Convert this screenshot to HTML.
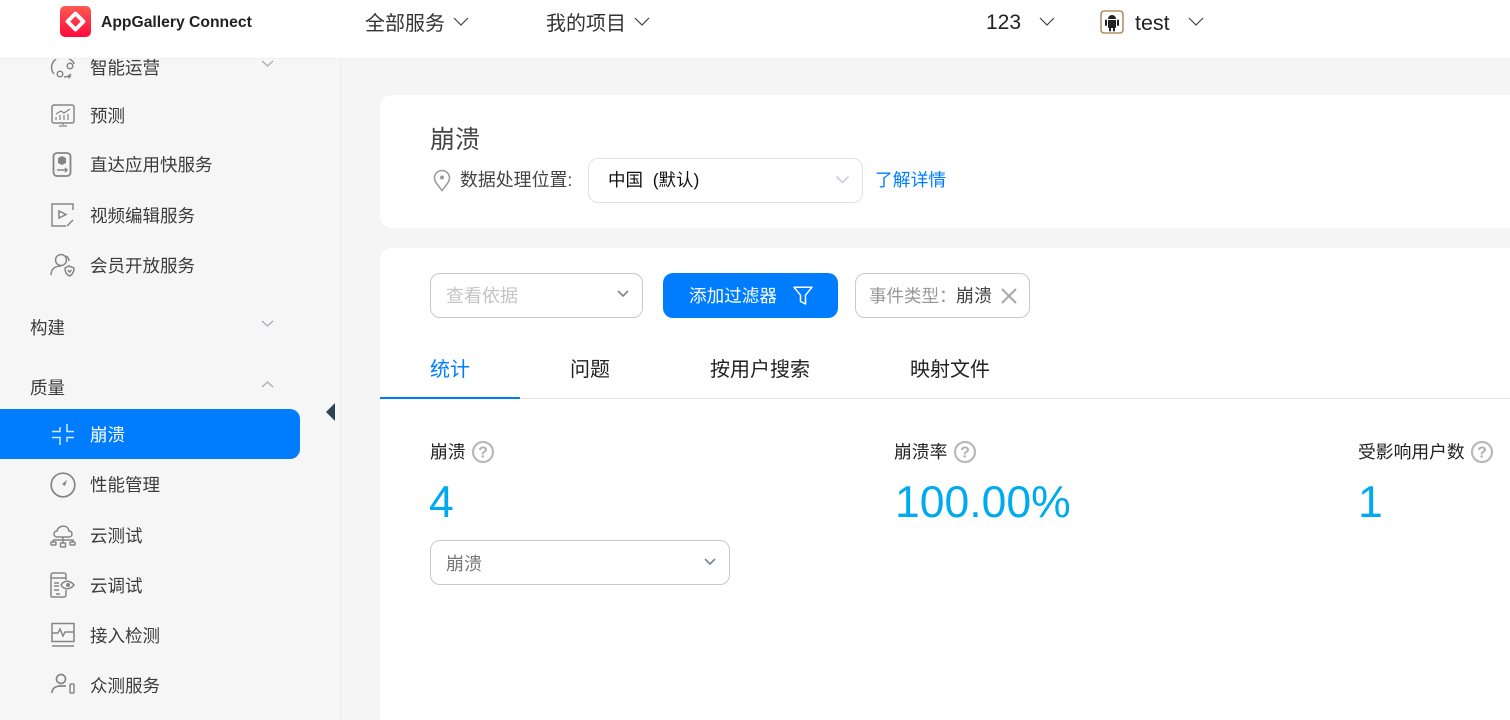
<!DOCTYPE html>
<html lang="zh">
<head>
<meta charset="utf-8">
<title>AppGallery Connect</title>
<style>
html,body{margin:0;padding:0;background:#f5f5f5}
body{position:relative;width:1510px;height:720px;overflow:hidden;font-family:"Liberation Sans","Noto Sans CJK SC",sans-serif;color:#333}
.a,.t{position:absolute}
.t{white-space:nowrap;line-height:24px;height:24px}
svg{position:absolute;overflow:visible;fill:none}
.m{font-size:17.5px;color:#3c3c3c;left:90px}
.g{font-size:17.5px;color:#3c3c3c;left:30px}
.i{stroke:#858585;stroke-width:1.5;fill:none}
.c{stroke:#a3a8b0;stroke-width:1.2;fill:none}
.box{position:absolute;box-sizing:border-box;background:#fff;border:1px solid #c9c9c9;border-radius:10px}
.num{font-size:44.5px;color:#00aaee;line-height:54px;height:54px}
.lab{font-size:17.800px;color:#222}
.q{stroke:#b9b9b9;stroke-width:2.200}
.qt{font-size:16px;font-weight:bold;fill:#b0b0b0;font-family:"Liberation Sans",sans-serif}
</style>
</head>
<body>
<div class="a" style="left:0;top:58px;width:340px;height:662px;background:#f6f6f6;border-right:1px solid #ececec"></div>

<!-- sidebar -->
<span class="t m" style="top:56px">智能运营</span>
<svg style="left:50px;top:56px" width="26" height="24" viewBox="0 0 26 24"><path class="i" d="M6 3C1 7 0 13 4 18M19 3c3 1 5 3 5 5M14 21c3 0 5-1 7-3M18 22l3-2"/><circle class="i" cx="10" cy="18" r="2.800"/><circle class="i" cx="20" cy="10" r="2.800"/></svg>
<svg style="left:261px;top:60px" width="13" height="8"><path class="c" d="M1 1l5.500 5L12 1"/></svg>

<span class="t m" style="top:104px">预测</span>
<svg style="left:51px;top:103px" width="24" height="24" viewBox="0 0 24 24"><rect class="i" x="1" y="2" width="22" height="18" rx="2"/><path class="i" d="M5 14v3M9 12v5M13 12v5M17 11v6M5 11l5-3 3 2 6-4M8 23h8M12 20v2" style="stroke-width:1.200"/></svg>

<span class="t m" style="top:153px">直达应用快服务</span>
<svg style="left:52px;top:152px" width="22" height="26" viewBox="0 0 22 26"><rect class="i" x="1.500" y="1" width="17" height="23" rx="3.500" style="stroke-width:1.800"/><path d="M6 6l4-2 4 2v5l-4 2-4-2z" fill="#858585"/><path class="i" d="M5 18h10m-2-2l2 2-2 2"/></svg>

<span class="t m" style="top:204px">视频编辑服务</span>
<svg style="left:51px;top:203px" width="24" height="24" viewBox="0 0 24 24"><path class="i" d="M22 7V1H1v22h14"/><path class="i" d="M8 8v7l7-3.500zM16 23l6-6"/></svg>

<span class="t m" style="top:254px">会员开放服务</span>
<svg style="left:50px;top:253px" width="26" height="24" viewBox="0 0 26 24"><circle class="i" cx="11" cy="7" r="5.500"/><path class="i" d="M1 22c0-6 4-9 10-9M16 3c2 1 3 3 3 5"/><path class="i" d="M15 15l4-2 5 2c0 5-2 7-4.500 8C17 22 15 20 15 15z"/><path class="i" d="M18 17l1.500 2 2-2"/></svg>

<span class="t g" style="top:316px">构建</span>
<svg style="left:261px;top:320px" width="13" height="8"><path class="c" d="M1 1l5.500 5L12 1"/></svg>
<span class="t g" style="top:376px">质量</span>
<svg style="left:261px;top:380px" width="13" height="8"><path class="c" d="M1 7l5.500-5L12 7"/></svg>

<div class="a" style="left:0;top:409px;width:300px;height:50px;background:#007dff;border-radius:0 10px 10px 0"></div>
<svg style="left:326px;top:403px" width="10" height="18"><path d="M9 0v18L0 9z" fill="#2f4257"/></svg>
<svg style="left:51px;top:423px" width="24" height="24" viewBox="0 0 24 24"><path d="M1 8.500h8V4M16 1v7.500h7M1 14.500h8V22M16 19v-4.500h7" stroke="#d5e8ff" stroke-width="1.500"/></svg>
<span class="t m" style="top:423px;color:#fff">崩溃</span>

<span class="t m" style="top:473px">性能管理</span>
<svg style="left:50px;top:472px" width="26" height="26" viewBox="0 0 26 26"><circle class="i" cx="13" cy="13" r="11.800" style="stroke-width:1.700"/><path d="M17 8l-2 6-3-2z" fill="#858585"/></svg>

<span class="t m" style="top:524px">云测试</span>
<svg style="left:50px;top:522px" width="26" height="26" viewBox="0 0 26 26"><path class="i" d="M7 15C3 15 3 9 7 9c1-6 11-7 12 0 4 0 4 6 0 6zM13 15v6M3 18h20v1M3 18v2M23 18v2"/><rect class="i" x="1" y="20" width="5" height="3" rx=".8"/><rect class="i" x="10.500" y="21" width="5" height="4" rx=".8"/><rect class="i" x="20" y="20" width="5" height="3" rx=".8"/></svg>

<span class="t m" style="top:574px">云调试</span>
<svg style="left:50px;top:572px" width="26" height="26" viewBox="0 0 26 26"><path class="i" d="M16 8V3a2 2 0 0 0-2-2H3a2 2 0 0 0-2 2v21a1 1 0 0 0 1 1h12a2 2 0 0 0 2-2v-5M1 6h15M4 11h5M4 14h5M4 18h5M6 22h4"/><path class="i" d="M11 13c3-5 9-5 13 0-4 5-10 5-13 0z"/><circle cx="18" cy="13" r="2" fill="#858585"/></svg>

<span class="t m" style="top:624px">接入检测</span>
<svg style="left:51px;top:622px" width="24" height="26" viewBox="0 0 24 26"><rect class="i" x="1" y="1.500" width="22" height="18"/><path class="i" d="M1 11h6l2-4 3 7 2-4h9M1 24h22"/></svg>

<span class="t m" style="top:674px">众测服务</span>
<svg style="left:51px;top:673px" width="24" height="24" viewBox="0 0 24 24"><circle class="i" cx="10" cy="6" r="4.500" style="stroke-width:1.700"/><path class="i" d="M1 20c0-5 4-7 9-7h5" style="stroke-width:1.700"/><rect class="i" x="19" y="11" width="4" height="9" rx="1"/></svg>

<!-- header -->
<div class="a" style="left:0;top:0;width:1510px;height:58px;background:#fff;border-bottom:1px solid #f0f0f0;box-sizing:content-box"></div>
<svg style="left:60px;top:6px" width="31" height="31" viewBox="0 0 31 31"><defs><linearGradient id="lg" x1="0" y1="0" x2="0" y2="1"><stop offset="0" stop-color="#fb5a52"/><stop offset="1" stop-color="#ff0a3c"/></linearGradient></defs><rect width="31" height="31" rx="5" fill="url(#lg)"/><path d="M15.500 7.500l8 8-8 8-8-8z" fill="none" stroke="#fff" stroke-width="3.800" stroke-linejoin="round"/></svg>
<span class="t" style="left:101px;top:11px;font-size:15.700px;font-weight:bold;color:#222">AppGallery Connect</span>
<span class="t" style="left:365px;top:12px;font-size:20px;color:#333">全部服务</span>
<svg style="left:453px;top:17px" width="16" height="10"><path d="M1 1l7 7 7-7" stroke="#444" stroke-width="1.200"/></svg>
<span class="t" style="left:546px;top:12px;font-size:20px;color:#333">我的项目</span>
<svg style="left:634px;top:17px" width="16" height="10"><path d="M1 1l7 7 7-7" stroke="#444" stroke-width="1.200"/></svg>
<span class="t" style="left:986px;top:11px;font-size:21px;color:#222">123</span>
<svg style="left:1039px;top:17px" width="16" height="10"><path d="M1 1l7 7 7-7" stroke="#444" stroke-width="1.200"/></svg>
<svg style="left:1100px;top:10px" width="24" height="24" viewBox="0 0 24 24"><rect x="1" y="1" width="22" height="22" rx="3" stroke="#a07a48" stroke-width="1.300" fill="#fff"/><path d="M8 9a4 4 0 0 1 8 0zM8 10h8v7a1 1 0 0 1-1 1H9a1 1 0 0 1-1-1z" fill="#222"/><path d="M6 10.500v4.500M18 10.500v4.500M10 18v2.500M14 18v2.500" stroke="#222" stroke-width="2" stroke-linecap="round"/></svg>
<span class="t" style="left:1135px;top:11px;font-size:21.500px;color:#222">test</span>
<svg style="left:1188px;top:17px" width="16" height="10"><path d="M1 1l7 7 7-7" stroke="#444" stroke-width="1.200"/></svg>

<!-- card 1 -->
<div class="a" style="left:380px;top:95px;width:1130px;height:133px;background:#fff;border-radius:12px 0 0 12px"></div>
<span class="t" style="left:430px;top:128px;font-size:25px;color:#444">崩溃</span>
<svg style="left:433px;top:169px" width="18" height="23" viewBox="0 0 18 23"><path d="M9 21.500C5 16 1.500 13 1.500 9a7.500 7.500 0 0 1 15 0c0 4-3.500 7-7.500 12.500z" stroke="#999" stroke-width="1.500"/><circle cx="9" cy="8.500" r="2" fill="#999"/></svg>
<span class="t" style="left:460px;top:168px;font-size:17.900px;color:#444">数据处理位置:</span>
<div class="box" style="left:588px;top:158px;width:275px;height:45px;border-color:#dfe1ea"></div>
<span class="t" style="left:608px;top:168px;font-size:17.500px;color:#111">中国&nbsp;&nbsp;(默认)</span>
<svg style="left:835px;top:175px" width="15" height="10"><path d="M1.500 1.500l6 6 6-6" stroke="#cfd1d8" stroke-width="1.800"/></svg>
<span class="t" style="left:875px;top:168px;font-size:17.800px;color:#007dff">了解详情</span>

<!-- card 2 -->
<div class="a" style="left:380px;top:248px;width:1130px;height:472px;background:#fff;border-radius:12px 0 0 0"></div>
<div class="box" style="left:430px;top:273px;width:213px;height:45px"></div>
<span class="t" style="left:446px;top:284px;font-size:18px;color:#c4c4c4">查看依据</span>
<svg style="left:616px;top:289px" width="14" height="9"><path d="M2 2l5 5 5-5" stroke="#7b8494" stroke-width="1.600"/></svg>
<div class="a" style="left:663px;top:273px;width:175px;height:45px;background:#007dff;border-radius:10px"></div>
<span class="t" style="left:689px;top:284px;font-size:17.600px;color:#fff">添加过滤器</span>
<svg style="left:793px;top:286px" width="20" height="19" viewBox="0 0 20 19"><path d="M1 1.200h18l-6.500 8V18l-5-2.500V9.200z" stroke="#fff" stroke-width="1.500" stroke-linejoin="round"/></svg>
<div class="box" style="left:855px;top:273px;width:175px;height:45px"></div>
<span class="t" style="left:869px;top:284px;font-size:17.500px;color:#999">事件类型：</span>
<span class="t" style="left:956px;top:284px;font-size:18px;color:#444">崩溃</span>
<svg style="left:1001px;top:288px" width="16" height="16"><path d="M1 1l14 14M15 1L1 15" stroke="#a8a8a8" stroke-width="2"/></svg>

<!-- tabs -->
<span class="t" style="left:430px;top:358px;font-size:20px;color:#007dff">统计</span>
<span class="t" style="left:570px;top:358px;font-size:20px;color:#222">问题</span>
<span class="t" style="left:710px;top:358px;font-size:20px;color:#222">按用户搜索</span>
<span class="t" style="left:910px;top:358px;font-size:20px;color:#222">映射文件</span>
<div class="a" style="left:380px;top:398px;width:1130px;height:1px;background:#e3e3e3"></div>
<div class="a" style="left:380px;top:397px;width:140px;height:2px;background:#007dff"></div>

<!-- stats -->
<span class="t lab" style="left:430px;top:440px">崩溃</span>
<svg style="left:471px;top:440px" width="24" height="24"><circle class="q" cx="12" cy="12" r="10"/><text class="qt" x="12" y="17.500" text-anchor="middle">?</text></svg>
<span class="t num" style="left:429px;top:476px">4</span>
<span class="t lab" style="left:894px;top:440px">崩溃率</span>
<svg style="left:953px;top:440px" width="24" height="24"><circle class="q" cx="12" cy="12" r="10"/><text class="qt" x="12" y="17.500" text-anchor="middle">?</text></svg>
<span class="t num" style="left:895px;top:476px">100.00%</span>
<span class="t lab" style="left:1358px;top:440px">受影响用户数</span>
<svg style="left:1470px;top:440px" width="24" height="24"><circle class="q" cx="12" cy="12" r="10"/><text class="qt" x="12" y="17.500" text-anchor="middle">?</text></svg>
<span class="t num" style="left:1358px;top:476px">1</span>

<div class="box" style="left:430px;top:540px;width:300px;height:45px"></div>
<span class="t" style="left:446px;top:552px;font-size:18px;color:#777">崩溃</span>
<svg style="left:703px;top:557px" width="14" height="9"><path d="M2 2l5 5 5-5" stroke="#7b8494" stroke-width="1.600"/></svg>
</body>
</html>
